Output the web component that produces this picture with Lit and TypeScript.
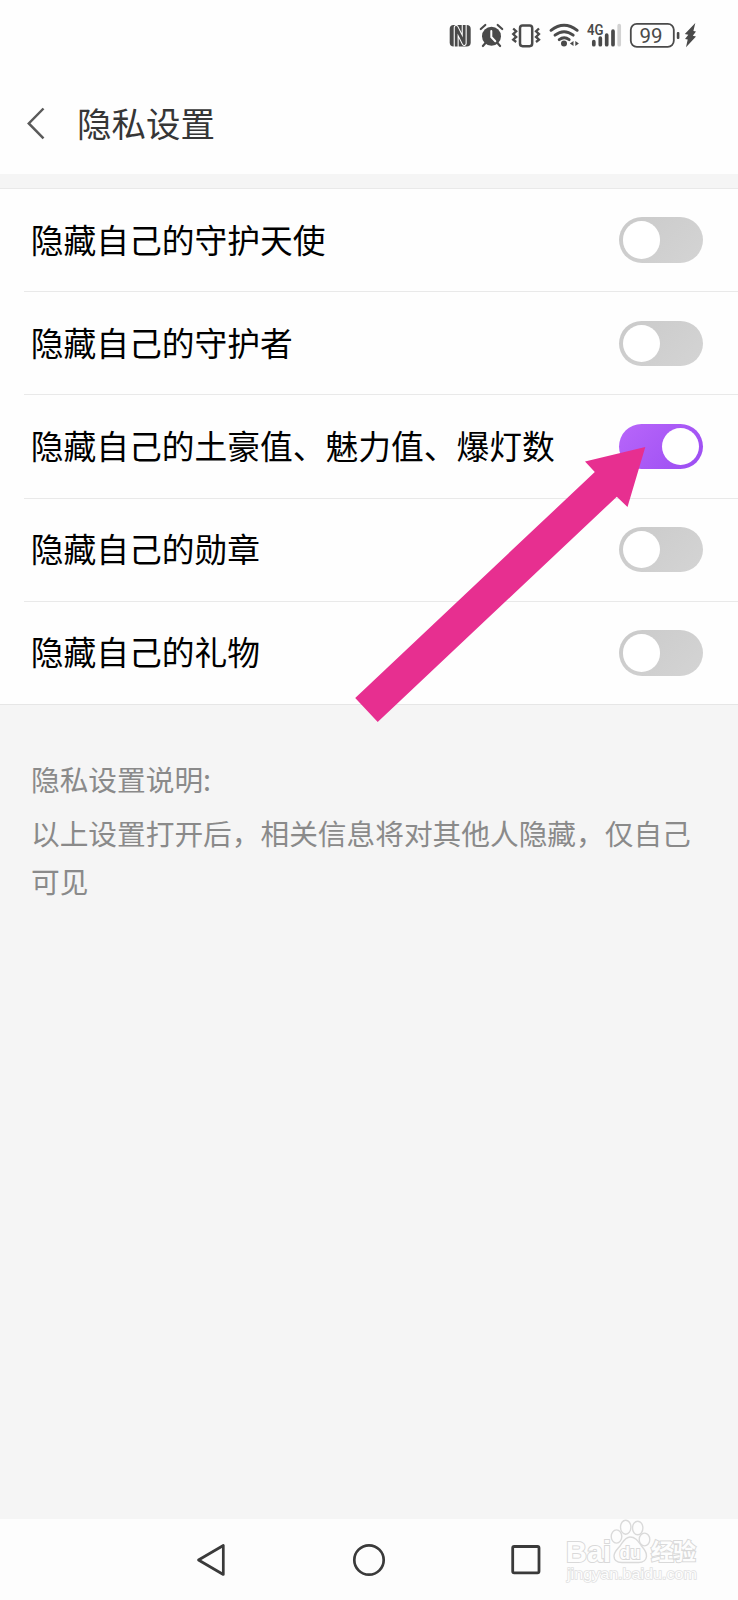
import { LitElement, html, css, svg } from "lit";
import { customElement, property } from "lit/decorators.js";

@customElement("toggle-switch")
class ToggleSwitch extends LitElement {
  @property({ type: Boolean, reflect: true }) on = false;

  static styles = css`
    :host {
      display: flex;
      flex: none;
      box-sizing: border-box;
      width: 84.5px;
      height: 45.5px;
      padding: 4px;
      border-radius: 23px;
      background: linear-gradient(135deg, #cacaca, #d4d4d4);
    }
    :host([on]) {
      justify-content: flex-end;
      background: linear-gradient(135deg, #b866fa, #9b4df2);
    }
    .knob {
      width: 37.5px;
      height: 37.5px;
      border-radius: 50%;
      background: #fff;
    }
  `;

  render() {
    return html`<div class="knob"></div>`;
  }
}

@customElement("app-root")
class AppRoot extends LitElement {
  private rows = [
    { label: "隐藏自己的守护天使", on: false },
    { label: "隐藏自己的守护者", on: false },
    { label: "隐藏自己的土豪值、魅力值、爆灯数", on: true },
    { label: "隐藏自己的勋章", on: false },
    { label: "隐藏自己的礼物", on: false },
  ];

  static styles = css`
    :host {
      display: flex;
      flex-direction: column;
      position: relative;
      width: 738px;
      height: 1600px;
      overflow: hidden;
      background: #f5f5f5;
      font-family: "Noto Sans CJK SC", sans-serif;
    }
    svg {
      display: block;
      flex: none;
    }
    .status {
      display: flex;
      justify-content: flex-end;
      height: 70px;
      padding-right: 38.5px;
      background: #fefefe;
      color: #4a4a4a;
    }
    .num {
      font-family: Roboto, sans-serif;
      font-size: 21px;
    }
    .net {
      font-family: Roboto, sans-serif;
      font-size: 14px;
      font-weight: 600;
    }
    .header {
      display: flex;
      align-items: center;
      box-sizing: border-box;
      height: 103.5px;
      padding: 1.5px 0 0 24px;
      background: #fefefe;
      margin-bottom: 14.5px;
    }
    .title {
      margin: 0 0 2px 29px;
      font-size: 34.5px;
      line-height: 50px;
      font-weight: 400;
      color: #363636;
    }
    .list {
      border-top: 1px solid #e9e9e9;
      border-bottom: 1px solid #e6e6e6;
      background: #fefefe;
    }
    .row {
      display: flex;
      align-items: center;
      justify-content: space-between;
      box-sizing: border-box;
      height: 103.2px;
      margin-left: 24px;
      padding: 0 34.7px 0 6.7px;
      border-bottom: 1px solid #e9e9e9;
    }
    .row:last-child {
      height: 102.2px;
      border-bottom: 0;
    }
    .label {
      padding-bottom: 3px;
      font-size: 32.75px;
      line-height: 48px;
      color: #000;
      white-space: nowrap;
    }
    .note {
      flex: 1;
      padding: 50px 30px 0 31px;
      font-size: 28.7px;
      line-height: 48px;
      color: #8a8a8a;
    }
    .note p {
      margin: 0 0 6px;
      width: 670px;
    }
    .nav {
      display: flex;
      align-items: center;
      justify-content: space-between;
      box-sizing: border-box;
      height: 81px;
      padding: 0 195px 0 196px;
      background: #fdfdfd;
    }
    .arrow {
      position: absolute;
      left: 350px;
      top: 440px;
    }
    .mark {
      position: absolute;
      left: 560px;
      top: 1515px;
    }
    .mark text {
      font-family: "Liberation Sans", "Noto Sans CJK SC", sans-serif;
      font-weight: 700;
      fill: #fdfdfd;
      stroke: #d9d9d9;
      stroke-width: 2px;
      paint-order: stroke;
    }
    .mark .url {
      font-weight: 400;
      stroke: #e0e0e0;
      stroke-width: 1.4px;
    }
  `;

  private statusIcons() {
    return html`
      <svg width="30" height="60" viewBox="446 0 30 60" fill="none">
        <rect x="449.7" y="25" width="21" height="21.6" rx="4" fill="#4a4a4a" />
        <path d="M456.2 47V27.5L464.2 43.5V24.5" stroke="#fefefe" stroke-width="5" stroke-linejoin="round" />
        <path d="M456.2 46.6V27.5L464.2 43.5V25" stroke="#4a4a4a" stroke-width="2.8" stroke-linejoin="round" />
      </svg>
      <svg width="32" height="60" viewBox="476 0 32 60" fill="none" stroke="#4a4a4a" stroke-linecap="round">
        <circle cx="491.5" cy="36.3" r="9.5" fill="#4a4a4a" stroke="none" />
        <path d="M480.8 29l4.5-4M502.2 29l-4.5-4M485.5 43l-2.6 3M497.5 43l2.6 3" stroke-width="2.2" />
        <path d="M491.3 31v6l4 4.2" stroke="#fefefe" stroke-width="2" />
      </svg>
      <svg width="38" height="60" viewBox="508 0 38 60" fill="none" stroke="#4a4a4a">
        <rect x="520" y="25.6" width="12.2" height="20.6" rx="2.6" stroke-width="2.5" />
        <path d="M513.2 28.5l3 2.8-3 2.8 3 2.8-3 2.8 3 2.3M539 28.5l-3 2.8 3 2.8-3 2.8 3 2.8-3 2.3" stroke-width="2.3" />
      </svg>
      <svg width="38" height="60" viewBox="546 0 38 60" fill="none" stroke="#4a4a4a" stroke-linecap="round">
        <path d="M551 30.3q13-10.2 26.2 0M555 35.2q9-7 18.2 0M559.2 39.6q5-3.8 10 0" stroke-width="2.9" />
        <circle cx="564" cy="43.5" r="3" fill="#4a4a4a" stroke="none" />
        <path d="M573.5 41v5l-3.6-2.5zM575.3 41v5l3.6-2.5z" fill="#4a4a4a" stroke="none" />
      </svg>
      <svg width="42" height="60" viewBox="584 0 42 60" fill="#4a4a4a">
        <text class="net" x="587" y="34.5" textLength="16.5" lengthAdjust="spacingAndGlyphs">4G</text>
        <g stroke="#4a4a4a" stroke-width="3.7" stroke-linecap="round">
          <path d="M593.8 41.7v3M600.3 38.2v6.5M606.7 35.2v9.5M613 31.2v13.5" />
          <path d="M619.2 25.7v19" stroke="#d2d2d2" />
        </g>
      </svg>
      <svg width="74" height="60" viewBox="626 0 74 60" fill="#4a4a4a">
        <rect x="630.8" y="23.8" width="43" height="23" rx="6" fill="none" stroke="#4a4a4a" stroke-width="1.8" />
        <text class="num" x="639.6" y="42.6" textLength="23" lengthAdjust="spacingAndGlyphs">99</text>
        <rect x="676.8" y="32" width="2.6" height="7" rx="1" />
        <path d="M695.3 23l-10.5 11 3.5.8-3.3 4.2 2.7.6L686 47.2 696 36.5l-3.2-.7 3.2-4.3-2.6-.6z" />
      </svg>
    `;
  }

  private watermark() {
    return svg`
      <text x="6" y="46.5" font-size="30" textLength="45" lengthAdjust="spacingAndGlyphs">Bai</text>
      <g fill="#fdfdfd" stroke="#dadada" stroke-width="1.4">
        <ellipse cx="56.5" cy="21.5" rx="5.3" ry="6.6" />
        <ellipse cx="65.7" cy="12.2" rx="5.2" ry="7" />
        <ellipse cx="77.7" cy="13" rx="5.2" ry="6.8" />
        <ellipse cx="84.5" cy="24.5" rx="5.3" ry="6.4" />
        <path d="M70 22c6 0 8.5 5 11.5 9 3 3.5 5.5 6 5 10.5-.5 4.500-4 6-8 6H62c-4.5 0-8-2-8-6.500 0-4 3-6.500 6-10 3-4 5-9 10-9z" />
      </g>
      <text x="59.5" y="43.5" font-size="19" textLength="21" lengthAdjust="spacingAndGlyphs">du</text>
      <text x="91" y="44.5" font-size="23" textLength="45">经验</text>
      <text class="url" x="7" y="64" font-size="15" textLength="130" lengthAdjust="spacingAndGlyphs">jingyan.baidu.com</text>
    `;
  }

  render() {
    return html`
      <div class="status">${this.statusIcons()}</div>
      <header class="header">
        <svg width="24" height="36" viewBox="24 104 24 36" fill="none" stroke="#5a5a5a" stroke-width="2.5">
          <path d="M43.5 107.5L28.8 122.5l14.7 14.8" />
        </svg>
        <h1 class="title">隐私设置</h1>
      </header>
      <section class="list">
        ${this.rows.map(
          (r) => html`<div class="row">
            <span class="label">${r.label}</span>
            <toggle-switch ?on=${r.on}></toggle-switch>
          </div>`
        )}
      </section>
      <section class="note">
        <p>隐私设置说明:</p>
        <p>以上设置打开后，相关信息将对其他人隐藏，仅自己可见</p>
      </section>
      <nav class="nav">
        <svg width="30" height="34" viewBox="0 0 30 34" fill="none" stroke="#3a3a3a" stroke-width="2.7" stroke-linejoin="round">
          <path d="M27.3 2.5v29L2.5 17z" />
        </svg>
        <svg width="34" height="34" viewBox="0 0 34 34" fill="none" stroke="#3a3a3a" stroke-width="2.7">
          <circle cx="17" cy="17" r="14.7" />
        </svg>
        <svg width="32" height="34" viewBox="0 0 32 34" fill="none" stroke="#3a3a3a" stroke-width="2.8">
          <rect x="1.7" y="3.5" width="26.3" height="26.3" rx="1.5" />
        </svg>
      </nav>
      <svg class="arrow" width="300" height="290" viewBox="350 440 300 290">
        <path d="M645.3 447L585 461.5 594.8 472 355.2 698 377.7 722 616.8 496.7 627.5 507z" fill="#e72f90" />
      </svg>
      <svg class="mark" width="150" height="75" viewBox="0 0 150 75">${this.watermark()}</svg>
    `;
  }
}
